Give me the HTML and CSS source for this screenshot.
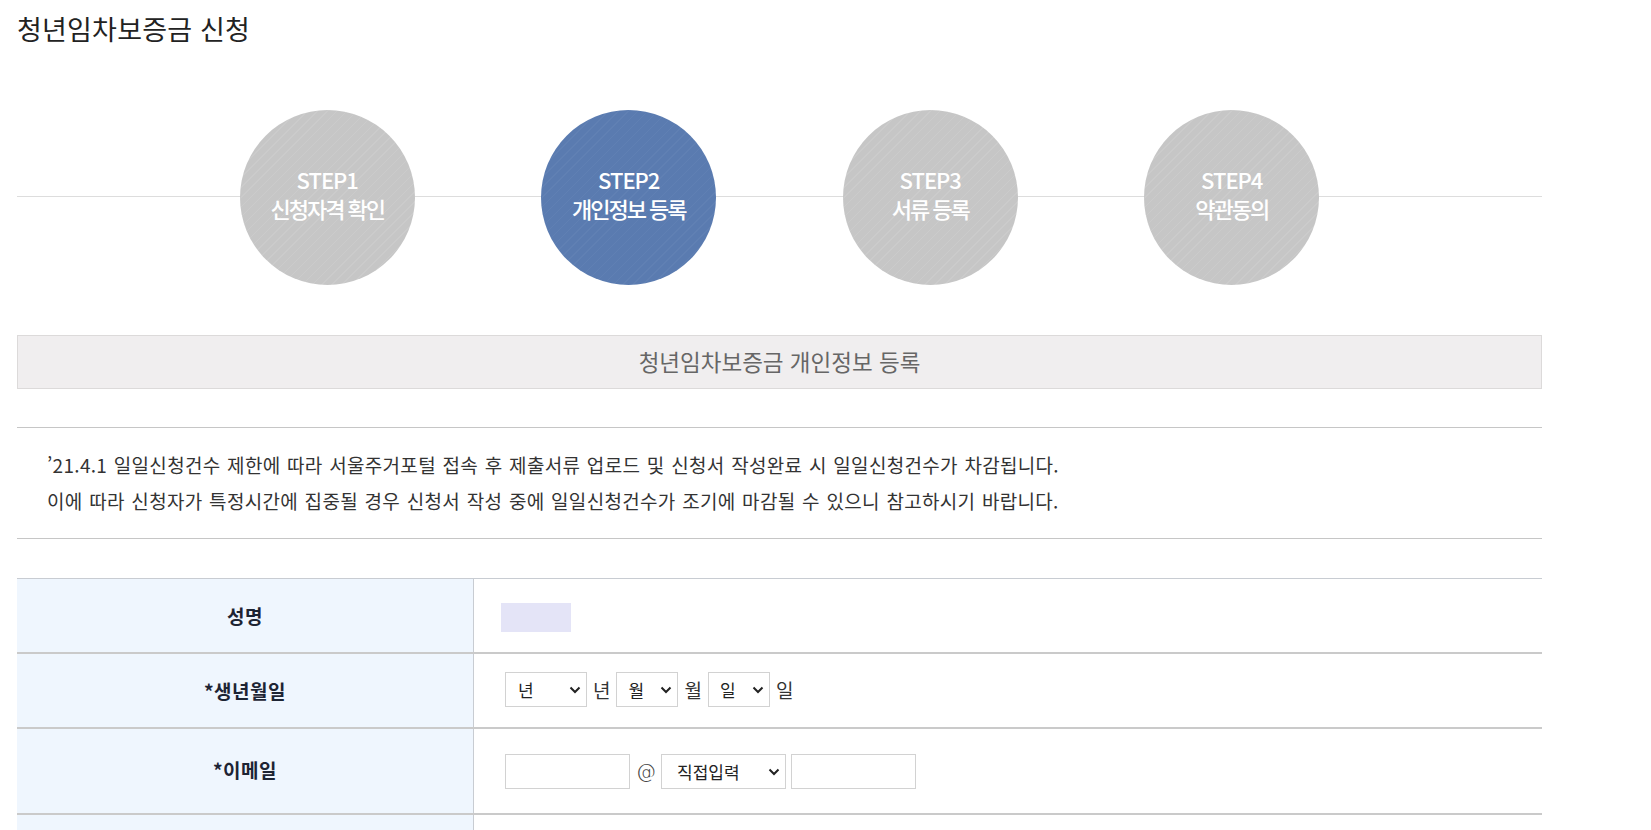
FILE: index.html
```html
<!DOCTYPE html>
<html lang="ko">
<head>
<meta charset="utf-8">
<title>청년임차보증금 신청</title>
<link rel="stylesheet" href="styles.css">
</head>
<body>
<div class="page">
  <h1 class="page-title">청년임차보증금 신청</h1>

  <div class="steps">
    <ol class="step-list">
      <li class="step"><div class="circle"><span class="step-no">STEP1</span><span class="step-name">신청자격 확인</span></div></li>
      <li class="step"><div class="circle active"><span class="step-no">STEP2</span><span class="step-name">개인정보 등록</span></div></li>
      <li class="step"><div class="circle"><span class="step-no">STEP3</span><span class="step-name">서류 등록</span></div></li>
      <li class="step"><div class="circle"><span class="step-no">STEP4</span><span class="step-name">약관동의</span></div></li>
    </ol>
  </div>

  <div class="section-title">청년임차보증금 개인정보 등록</div>

  <div class="notice">
    <p>’21.4.1 일일신청건수 제한에 따라 서울주거포털 접속 후 제출서류 업로드 및 신청서 작성완료 시 일일신청건수가 차감됩니다.</p>
    <p>이에 따라 신청자가 특정시간에 집중될 경우 신청서 작성 중에 일일신청건수가 조기에 마감될 수 있으니 참고하시기 바랍니다.</p>
  </div>

  <div class="form-table">
    <div class="row row-name">
      <div class="label">성명</div>
      <div class="value"><span class="name-box"></span></div>
    </div>
    <div class="row row-birth">
      <div class="label">*생년월일</div>
      <div class="value">
        <span class="sel sel-year"><select><option>년</option></select><svg class="chev" viewBox="0 0 12 8"><path d="M1.5 1.5 L6 6 L10.5 1.5" fill="none" stroke="#222" stroke-width="2"/></svg></span>
        <span class="unit">년</span>
        <span class="sel sel-small"><select><option>월</option></select><svg class="chev" viewBox="0 0 12 8"><path d="M1.5 1.5 L6 6 L10.5 1.5" fill="none" stroke="#222" stroke-width="2"/></svg></span>
        <span class="unit">월</span>
        <span class="sel sel-small"><select><option>일</option></select><svg class="chev" viewBox="0 0 12 8"><path d="M1.5 1.5 L6 6 L10.5 1.5" fill="none" stroke="#222" stroke-width="2"/></svg></span>
        <span class="unit">일</span>
      </div>
    </div>
    <div class="row row-email">
      <div class="label">*이메일</div>
      <div class="value">
        <input class="txt" type="text">
        <span class="at">@</span>
        <span class="sel sel-mail"><select><option>직접입력</option></select><svg class="chev" viewBox="0 0 12 8"><path d="M1.5 1.5 L6 6 L10.5 1.5" fill="none" stroke="#222" stroke-width="2"/></svg></span>
        <input class="txt txt-domain" type="text">
      </div>
    </div>
    <div class="row row-next">
      <div class="label"></div>
      <div class="value"></div>
    </div>
  </div>
</div>
</body>
</html>
```

FILE: styles.css
```css
* { box-sizing: border-box; }
html, body { margin: 0; padding: 0; background: #fff; }
body {
  font-family: "Noto Sans CJK KR", "Noto Sans", sans-serif;
  color: #333;
  overflow: hidden;
}
.page {
  width: 1525px;
  margin-left: 17px;
  padding-top: 11px;
}
.page-title {
  margin: 0;
  font-size: 27px;
  line-height: 36px;
  font-weight: 400;
  color: #222;
  letter-spacing: 0.2px;
}

/* steps */
.steps {
  margin-top: 63px;
  height: 175px;
  background: linear-gradient(#dddddd, #dddddd) 0 86px / 100% 1px no-repeat;
}
.step-list {
  list-style: none;
  margin: 0 auto;
  padding: 0;
  width: 1206px;
  display: grid;
  grid-template-columns: repeat(4, 1fr);
}
.step { display: flex; justify-content: center; }
.circle {
  width: 175px;
  height: 175px;
  border-radius: 50%;
  display: flex;
  flex-direction: column;
  align-items: center;
  justify-content: center;
  color: #fff;
  font-weight: 500;
  font-size: 22px;
  line-height: 29px;
  padding-bottom: 7px;
  background: repeating-linear-gradient(135deg, #c6c6c6 0 6px, #cbcbcb 6px 7px);
}
.circle.active {
  background: repeating-linear-gradient(135deg, #5a7bb0 0 6px, #6080b3 6px 7px);
}
.step-no { letter-spacing: -1px; }
.step-name { letter-spacing: -2px; }

/* section title */
.section-title {
  margin-top: 50px;
  height: 54px;
  border: 1px solid #dcdada;
  background: #f0eeef;
  display: flex;
  align-items: center;
  justify-content: center;
  font-size: 22.5px;
  color: #666;
  padding-bottom: 2px;
}

/* notice */
.notice {
  margin-top: 38px;
  height: 112px;
  border-top: 1px solid #c6c6c6;
  border-bottom: 1px solid #c6c6c6;
  padding: 19px 0 0 30px;
  font-size: 19px;
  line-height: 36px;
  color: #333;
  letter-spacing: 0.3px;
  word-spacing: 1px;
}
.notice p { margin: 0; }

/* form table */
.form-table {
  margin-top: 39px;
  border-top: 1px solid #c8ccd2;
}
.row {
  display: grid;
  grid-template-columns: 457px 1fr;
  border-bottom: 2px solid #cacaca;
}
.row-name { height: 75px; }
.row-birth { height: 75px; }
.row-email { height: 86px; }
.row-next { height: 40px; border-bottom: 0; }
.label {
  background: #eff6fe;
  border-right: 1px solid #c8ccd2;
  display: flex;
  align-items: center;
  justify-content: center;
  font-size: 19px;
  font-weight: 700;
  color: #1d2433;
  letter-spacing: 0.5px;
}
.row-email .label { padding-bottom: 3px; }
.value {
  display: flex;
  align-items: center;
  padding-left: 31px;
  font-size: 18px;
  color: #333;
}
.row-birth .value { padding-bottom: 2px; }
.row-name .value { padding-left: 27px; padding-top: 4px; }
.name-box {
  display: block;
  width: 70px;
  height: 29px;
  background: #e4e4f7;
}
.sel {
  position: relative;
  display: inline-block;
  height: 35px;
}
.sel select {
  appearance: none;
  -webkit-appearance: none;
  height: 35px;
  border: 1px solid #d2d2d2;
  background: #fff;
  font-family: "Noto Sans CJK KR", sans-serif;
  font-size: 17px;
  color: #222;
  padding: 0 0 0 12px;
  margin: 0;
  border-radius: 0;
}
.sel-year select { width: 82px; }
.sel-small select { width: 62px; padding-left: 11px; }
.sel-mail select { width: 125px; padding-left: 15px; }
.chev {
  position: absolute;
  right: 6px;
  top: 14px;
  width: 12px;
  height: 8px;
  pointer-events: none;
}
.unit { margin: 0 6px 0 6px; font-size: 19px; }
.txt {
  width: 125px;
  height: 35px;
  border: 1px solid #d2d2d2;
  margin: 0;
  border-radius: 0;
}
.at { margin: 0 5px 0 6px; font-size: 20px; color: #444; font-family: "DejaVu Sans", sans-serif; font-weight: 300; }
.txt-domain { margin-left: 5px; }
```
